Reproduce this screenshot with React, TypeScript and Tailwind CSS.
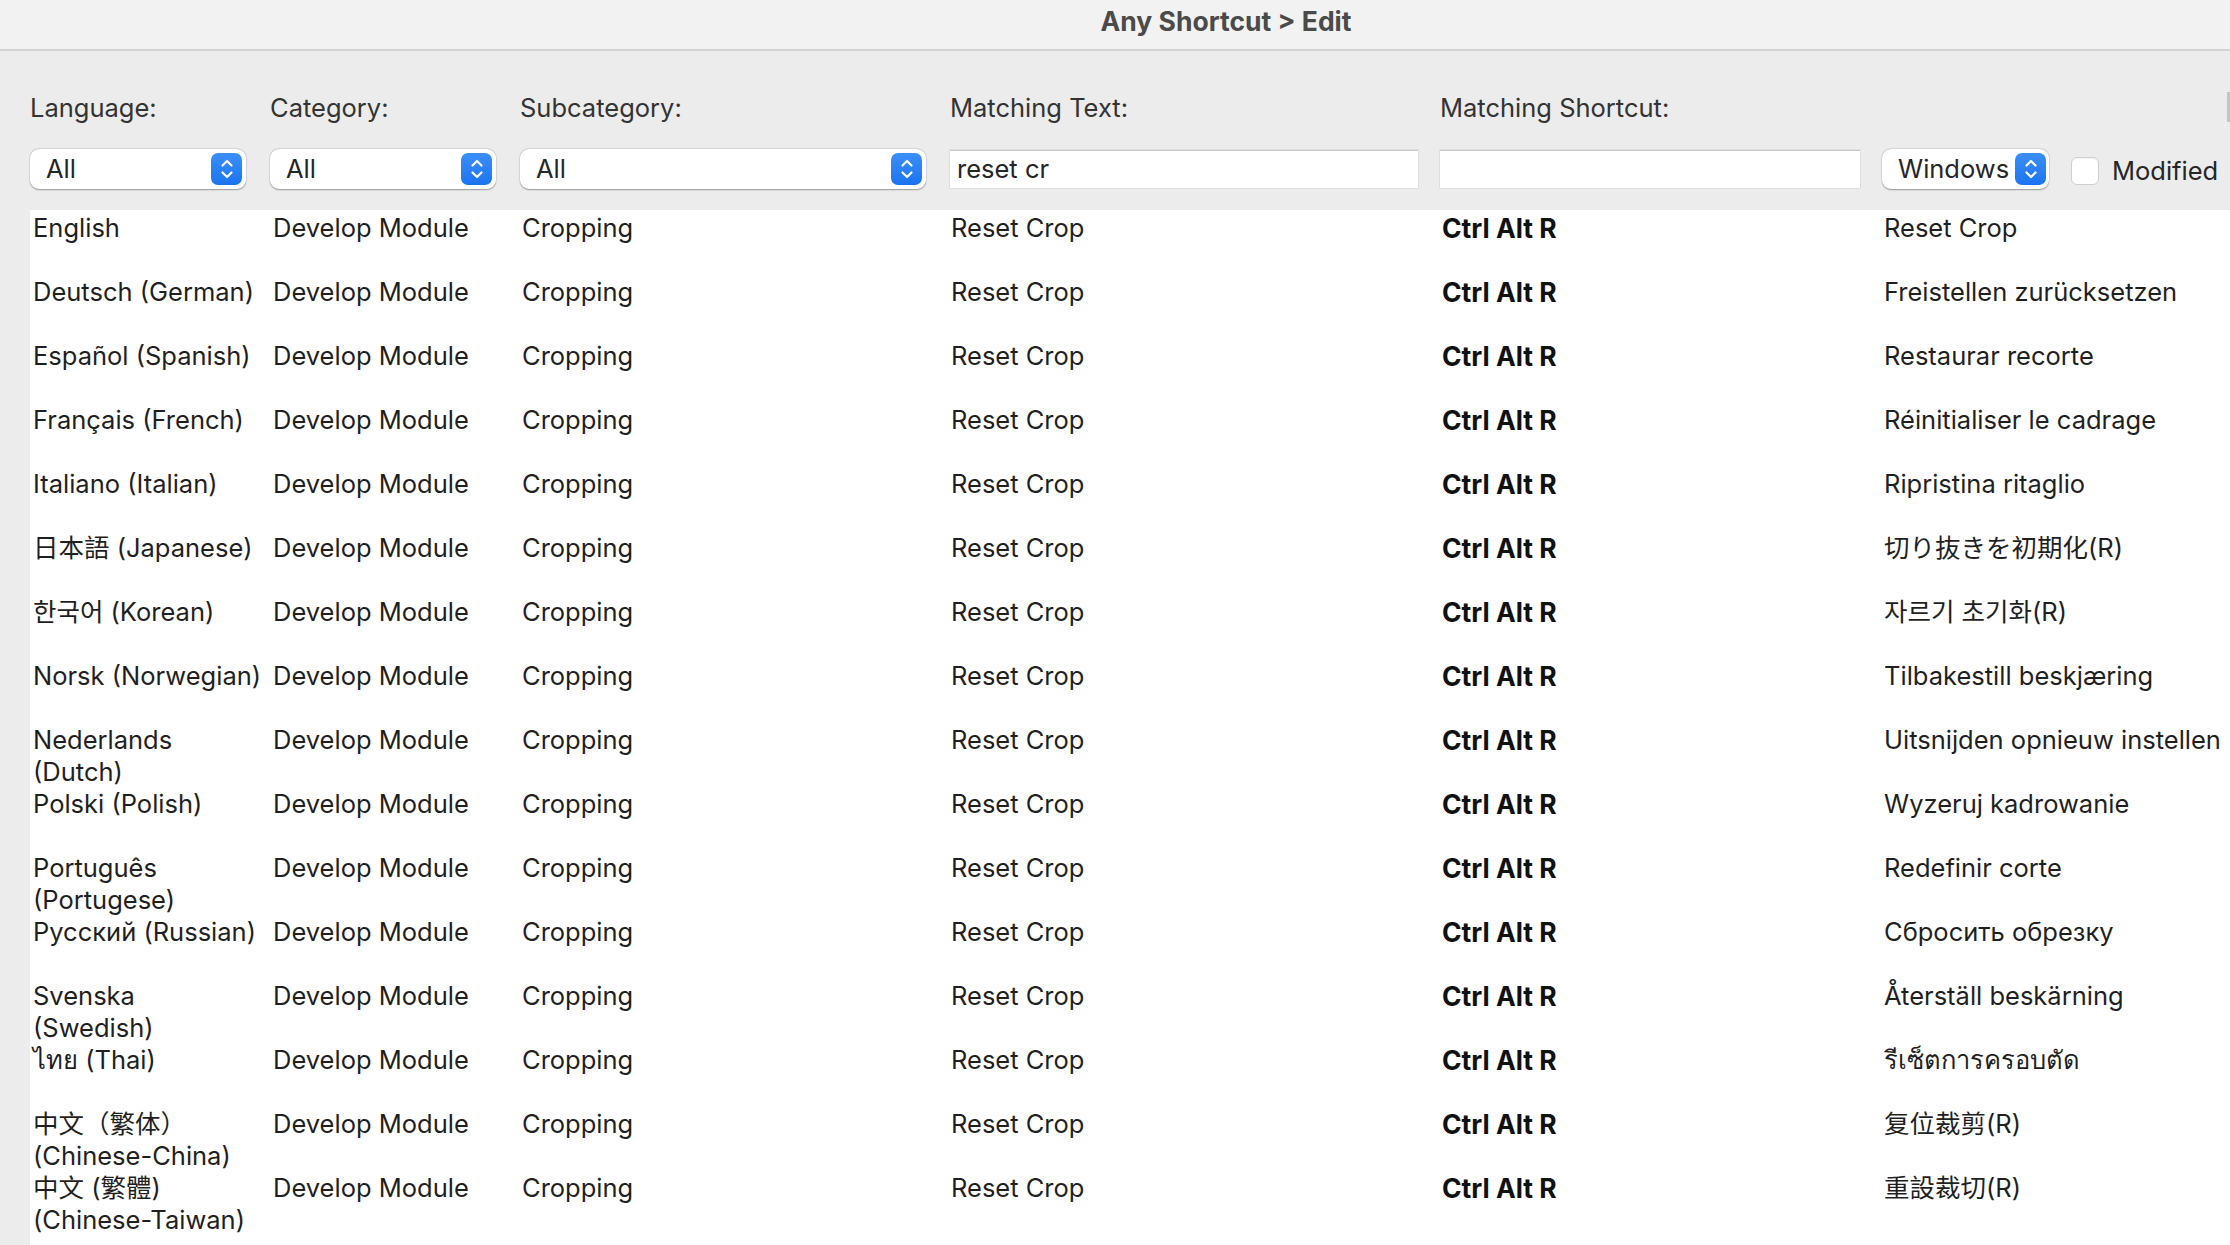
import React from "react";

const rows: [string, string][] = [
  ["English", "Reset Crop"],
  ["Deutsch (German)", "Freistellen zurücksetzen"],
  ["Español (Spanish)", "Restaurar recorte"],
  ["Français (French)", "Réinitialiser le cadrage"],
  ["Italiano (Italian)", "Ripristina ritaglio"],
  ["日本語 (Japanese)", "切り抜きを初期化(R)"],
  ["한국어 (Korean)", "자르기 초기화(R)"],
  ["Norsk (Norwegian)", "Tilbakestill beskjæring"],
  ["Nederlands\n(Dutch)", "Uitsnijden opnieuw instellen"],
  ["Polski (Polish)", "Wyzeruj kadrowanie"],
  ["Português\n(Portugese)", "Redefinir corte"],
  ["Русский (Russian)", "Сбросить обрезку"],
  ["Svenska\n(Swedish)", "Återställ beskärning"],
  ["ไทย (Thai)", "รีเซ็ตการครอบตัด"],
  ["中文（繁体）\n(Chinese-China)", "复位裁剪(R)"],
  ["中文 (繁體)\n(Chinese-Taiwan)", "重設裁切(R)"],
];

function Stepper() {
  return (
    <div className="w-[31px] h-[32px] rounded-[7px] bg-gradient-to-b from-[#3b8ff9] to-[#1a74f0] flex items-center justify-center shrink-0">
      <svg width="16" height="24" viewBox="0 0 16 24" fill="none">
        <path d="M3.5 8.5 L8 4 L12.5 8.5" stroke="white" strokeWidth="2.2" strokeLinecap="round" strokeLinejoin="round" />
        <path d="M3.5 15.5 L8 20 L12.5 15.5" stroke="white" strokeWidth="2.2" strokeLinecap="round" strokeLinejoin="round" />
      </svg>
    </div>
  );
}

function Popup({ label, width }: { label: string; width: string }) {
  return (
    <div
      className={`${width} h-[40px] bg-white rounded-[9px] shadow-[0_0.5px_1.5px_rgba(0,0,0,0.35),0_0_0_0.5px_rgba(0,0,0,0.06)] flex items-center pl-[16px] pr-[4px] shrink-0`}
    >
      <span className="flex-1 text-[25.5px] leading-[32px] text-[#262626]">{label}</span>
      <Stepper />
    </div>
  );
}

export default function App() {
  return (
    <div
      className="w-[2230px] h-[1245px] bg-[#ececec] overflow-hidden flex flex-col"
      style={{ fontFamily: 'Inter, "Noto Sans CJK SC", "Noto Sans CJK JP", "Noto Sans CJK KR", sans-serif' }}
    >
      {/* Title bar */}
      <div className="h-[51px] shrink-0 bg-[#f2f2f2] border-b-[2px] border-[#d2d2d2] flex items-center justify-center pl-[222px]">
        <span className="text-[26.5px] font-bold text-[#4a4a4a] leading-[30px] -mt-[8px]">Any Shortcut &gt; Edit</span>
      </div>

      {/* Labels */}
      <div className="flex items-center pl-[30px] pt-[40px] h-[74px] shrink-0 text-[25.5px] leading-[32px] text-[#333333]">
        <div className="w-[240px]">Language:</div>
        <div className="w-[250px]">Category:</div>
        <div className="w-[430px]">Subcategory:</div>
        <div className="w-[490px]">Matching Text:</div>
        <div className="flex-1">Matching Shortcut:</div>
        <div className="w-[3px] h-[30px] bg-[#c4c4c4] -mt-[2px]" />
      </div>

      {/* Controls */}
      <div className="flex items-center pl-[30px] mt-[24px] h-[40px] shrink-0">
        <Popup label="All" width="w-[216px]" />
        <div className="w-[24px]" />
        <Popup label="All" width="w-[226px]" />
        <div className="w-[24px]" />
        <Popup label="All" width="w-[406px]" />
        <div className="w-[24px]" />
        <div className="w-[468px] h-[38px] bg-white border-t border-[#c9c9c9] shadow-[0_0_0_0.5px_rgba(0,0,0,0.12)] flex items-center pl-[7px] text-[25.5px] text-[#262626] shrink-0">
          reset cr
        </div>
        <div className="w-[22px]" />
        <div className="w-[420px] h-[38px] bg-white border-t border-[#c9c9c9] shadow-[0_0_0_0.5px_rgba(0,0,0,0.12)] shrink-0" />
        <div className="w-[22px]" />
        <div className="w-[167px] h-[40px] bg-white rounded-[9px] shadow-[0_0.5px_1.5px_rgba(0,0,0,0.35),0_0_0_0.5px_rgba(0,0,0,0.06)] flex items-center pl-[16px] pr-[3px] shrink-0">
          <span className="flex-1 text-[25.5px] leading-[32px] text-[#262626]">Windows</span>
          <Stepper />
        </div>
        <div className="w-[22px]" />
        <div className="w-[28px] h-[28px] mt-[4px] bg-white rounded-[6px] border border-[#cfcfcf] shadow-[inset_0_1px_1px_rgba(0,0,0,0.05)] shrink-0" />
        <span className="ml-[13px] mt-[4px] text-[25.5px] leading-[32px] text-[#262626]">Modified</span>
      </div>

      {/* Table */}
      <div className="mt-[21px] ml-[30px] flex-1 bg-white pl-[3px] text-[25.5px] leading-[32px] text-[#1f1f1f]">
        {rows.map(([lang, tr], i) => (
          <div key={i} className="h-[64px] flex pt-[2px]">
            <div className="w-[240px] whitespace-pre-line shrink-0">{lang}</div>
            <div className="w-[249px] shrink-0">Develop Module</div>
            <div className="w-[429px] shrink-0">Cropping</div>
            <div className="w-[491px] shrink-0">Reset Crop</div>
            <div className="w-[442px] shrink-0 font-bold text-[26.5px] text-[#111111]">Ctrl Alt R</div>
            <div className="flex-1 whitespace-nowrap">{tr}</div>
          </div>
        ))}
      </div>
    </div>
  );
}
